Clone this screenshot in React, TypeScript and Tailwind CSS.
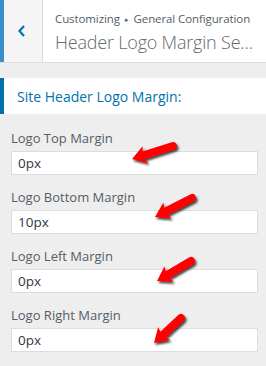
import React from 'react';

type Arrow = { tip: [number, number]; tail: [number, number] };

const ARROWS: Arrow[] = [
  { tip: [132, 159], tail: [173, 146] },
  { tip: [155, 217], tail: [192, 198] },
  { tip: [157, 281], tail: [191, 261] },
  { tip: [154, 343], tail: [181, 318] },
];

const FIELDS = [
  { label: 'Logo Top Margin', value: '0px' },
  { label: 'Logo Bottom Margin', value: '10px' },
  { label: 'Logo Left Margin', value: '0px' },
  { label: 'Logo Right Margin', value: '0px' },
];

const RedArrow = ({ tip, tail }: Arrow) => {
  const dx = tail[0] - tip[0];
  const dy = tail[1] - tip[1];
  const len = Math.hypot(dx, dy);
  const ux = dx / len;
  const uy = dy / len;
  const nx = -uy;
  const ny = ux;
  const head = 14;
  const half = 9;
  const bx = tip[0] + ux * head;
  const by = tip[1] + uy * head;
  const pts = [
    `${tip[0]},${tip[1]}`,
    `${bx + nx * half},${by + ny * half}`,
    `${tip[0] + ux * (head - 3)},${tip[1] + uy * (head - 3)}`,
    `${bx - nx * half},${by - ny * half}`,
  ].join(' ');
  return (
    <g filter="url(#arrow-shadow)">
      <line
        x1={tip[0] + ux * 8}
        y1={tip[1] + uy * 8}
        x2={tail[0]}
        y2={tail[1]}
        stroke="#ff0000"
        strokeWidth={8}
        strokeLinecap="round"
      />
      <polygon points={pts} fill="#ff0000" />
    </g>
  );
};

const App: React.FC = () => {
  return (
    <div className="relative w-[266px] h-[366px] overflow-hidden bg-[#eeeeee] font-['Open_Sans','Noto_Sans',sans-serif]">
      {/* Header */}
      <div className="flex h-[63px] bg-white border-b border-[#dddddd]">
        <div className="w-[43px] shrink-0 flex items-center justify-center bg-[#f5f5f5] border-l-4 border-[#3a8fc6] border-r border-r-[#dddddd]">
          <svg width="10" height="14" viewBox="0 0 10 14" className="-ml-[3px]">
            <path d="M7 2 L2.5 7 L7 12" fill="none" stroke="#0073aa" strokeWidth="2.2" />
          </svg>
        </div>
        <div className="min-w-0 flex-1 pl-[12px] pr-[8px] pt-[10px]">
          <div className="text-[11.5px] leading-[17px] tracking-[-0.1px] text-[#555d66] whitespace-nowrap">
            Customizing <span className="text-[7px] align-[1px] px-[2px]">▸</span> General Configuration
          </div>
          <div className="truncate text-[18px] leading-[28px] tracking-[-0.2px] font-light text-[#646970]">
            Header Logo Margin Settings
          </div>
        </div>
      </div>

      {/* Section title */}
      <div className="mt-[15px] h-[36px] flex items-center bg-white border-l-4 border-[#0073aa] pl-[13px] text-[14px] text-[#0073aa]">
        Site Header Logo Margin:
      </div>

      {/* Fields */}
      <div className="flex flex-col gap-[13px] pt-[15px] pl-[11px] pr-[8px]">
        {FIELDS.map((f) => (
          <div key={f.label}>
            <div className="h-[18px] leading-[18px] mb-[4px] text-[13px] text-[#555d66]">{f.label}</div>
            <input
              readOnly
              value={f.value}
              className="block w-full h-[24px] bg-white border border-[#dddddd] pl-[6px] text-[13.5px] text-[#32373c] outline-none"
            />
          </div>
        ))}
      </div>

      {/* Annotation arrows */}
      <svg className="absolute inset-0 pointer-events-none" width="266" height="366">
        <defs>
          <filter id="arrow-shadow" x="-30%" y="-30%" width="160%" height="160%">
            <feDropShadow dx="1.5" dy="2" stdDeviation="1.3" floodColor="#000" floodOpacity="0.75" />
          </filter>
        </defs>
        {ARROWS.map((a, i) => (
          <RedArrow key={i} tip={a.tip} tail={a.tail} />
        ))}
      </svg>
    </div>
  );
};

export default App;
